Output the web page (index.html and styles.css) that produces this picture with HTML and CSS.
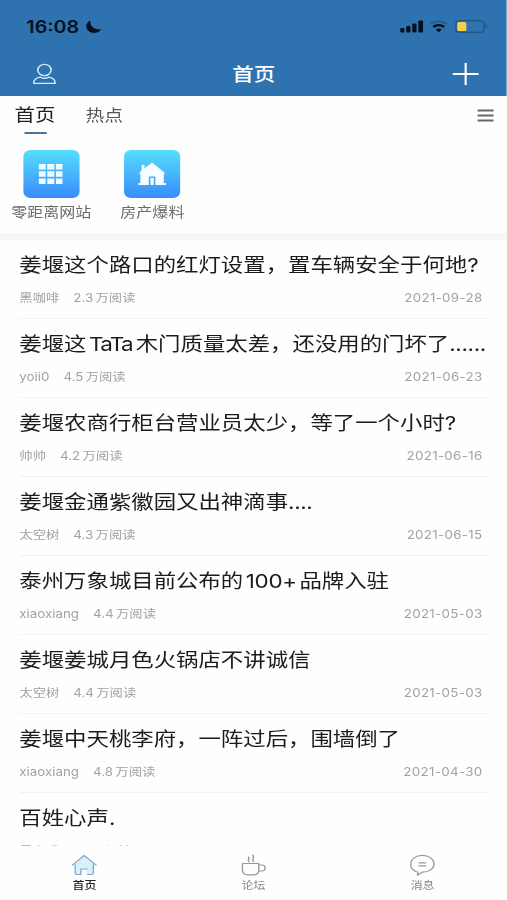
FILE: index.html
```
<!DOCTYPE html>
<html lang="zh-CN">
<head>
    <meta charset="UTF-8">
    <meta name="viewport" content="width=device-width, initial-scale=1.0">
    <title>首页</title>
    <link rel="stylesheet" href="styles.css">
</head>
<body>
<div class="app">
    <header>
        <div class="status">
            <span class="time">16:08</span>
            <svg class="moon" width="14" height="14" viewBox="0 0 14 14"><path d="M4.200 .4A6.700 6.700 0 1 0 13.600 9C9 10.800 3.200 6.500 4.200 .4z" fill="#05101f"/></svg>
            <svg class="signal" width="20" height="13" viewBox="0 0 20 13" fill="#05101f">
                <rect x="0" y="8" width="3.6" height="4.5" rx="1"/>
                <rect x="5.2" y="6" width="3.6" height="6.5" rx="1"/>
                <rect x="10.4" y="3.5" width="3.6" height="9" rx="1"/>
                <rect x="15.6" y="0.5" width="4" height="12" rx="1"/>
            </svg>
            <svg class="wifi" width="16" height="13" viewBox="0 0 16 13" fill="none">
                <path d="M1 4.2a10.2 10.2 0 0 1 14 0" stroke="#1f5d93" stroke-width="1.8"/>
                <path d="M3.3 7a6.8 6.8 0 0 1 9.4 0" stroke="#05101f" stroke-width="2.2"/>
                <path d="M5.4 9.6a3.8 3.8 0 0 1 5.2 0L8 12.2z" fill="#05101f"/>
            </svg>
            <svg class="battery" width="28" height="13" viewBox="0 0 28 13">
                <rect x=".6" y=".6" width="24" height="11.8" rx="3" fill="none" stroke="#1f5688" stroke-width="1.2"/>
                <rect x="1.8" y="2" width="7.8" height="9" rx="1.5" fill="#f5cf4a"/>
                <path d="M25.8 4.5v4c2-.6 2-3.4 0-4z" fill="#1f5688"/>
            </svg>
        </div>
        <div class="navbar">
            <svg class="user" width="20" height="22" viewBox="0 0 20 22" fill="none" stroke="#d3eaf8" stroke-width="1.3">
                <circle cx="10" cy="7" r="5.7"/>
                <path d="M.8 20.3c0-4 3-5.7 5.8-6.1 1.9 1.2 4.9 1.2 6.8 0 2.8.4 5.8 2.1 5.8 6.1z" stroke-linejoin="round"/>
            </svg>
            <h1>首页</h1>
            <svg class="plus" width="24" height="24" viewBox="0 0 24 24" stroke="#fff" stroke-width="1.8"><path d="M1 12h22M12 1v22"/></svg>
        </div>
    </header>

    <nav class="tabs">
        <a class="tab active">首页</a>
        <a class="tab">热点</a>
        <svg class="menu" width="14" height="13" viewBox="0 0 14 13" stroke="#666" stroke-width="1.9"><path d="M0 1.500h14M0 6.500h14M0 11.500h14"/></svg>
    </nav>

    <section class="shortcuts">
        <div class="shortcut">
            <div class="tile">
                <svg width="21" height="20" viewBox="0 0 21 20" fill="#f2fbff">
                    <path d="M0 0h6v5.600H0zM7.400 0h6v5.600h-6zM14.800 0h5.600v5.600h-5.600zM0 7.200h6v5.600H0zM7.400 7.200h6v5.600h-6zM14.800 7.200h5.600v5.600h-5.600zM0 14.400h6v5.600H0zM7.400 14.400h6v5.600h-6zM14.800 14.400h5.600v5.600h-5.600z"/>
                </svg>
            </div>
            <span>零距离网站</span>
        </div>
        <div class="shortcut">
            <div class="tile">
                <svg width="24" height="24" viewBox="0 0 24 24" fill="#f7fdff">
                    <path d="M12 .5 5.500 6.200V3H3v5.600L1 11l1 1.500V21H.2v2h9V14.500h5.600V23h9v-2H22v-8.500l1-1.500z"/>
                    <path d="M10.600 16h2.800v7h-2.800z"/>
                </svg>
            </div>
            <span>房产爆料</span>
        </div>
    </section>

    <main>
        <article>
            <h2>姜堰这个路口的红灯设置，置车辆安全于何地?</h2>
            <p><span>黑咖啡</span><span>2.3 万阅读</span><time>2021-09-28</time></p>
        </article>
        <article>
            <h2>姜堰这 <b class="name">TaTa</b> 木门质量太差，还没用的门坏了<i>......</i></h2>
            <p><span>yoii0</span><span>4.5 万阅读</span><time>2021-06-23</time></p>
        </article>
        <article>
            <h2>姜堰农商行柜台营业员太少，等了一个小时?</h2>
            <p><span>帅帅</span><span>4.2 万阅读</span><time>2021-06-16</time></p>
        </article>
        <article>
            <h2>姜堰金通紫徽园又出神滴事<i>....</i></h2>
            <p><span>太空树</span><span>4.3 万阅读</span><time>2021-06-15</time></p>
        </article>
        <article>
            <h2>泰州万象城目前公布的 <b>100+</b> 品牌入驻</h2>
            <p><span>xiaoxiang</span><span>4.4 万阅读</span><time>2021-05-03</time></p>
        </article>
        <article>
            <h2>姜堰姜城月色火锅店不讲诚信</h2>
            <p><span>太空树</span><span>4.4 万阅读</span><time>2021-05-03</time></p>
        </article>
        <article>
            <h2>姜堰中天桃李府，一阵过后，围墙倒了</h2>
            <p><span>xiaoxiang</span><span>4.8 万阅读</span><time>2021-04-30</time></p>
        </article>
        <article>
            <h2>百姓心声.</h2>
            <p><span>黑咖啡</span><span>4.1 万阅读</span></p>
        </article>
    </main>

    <footer>
        <a class="active">
            <svg width="22" height="22" viewBox="0 0 22 22" fill="none" stroke="#7fa6c6" stroke-width="1.1" stroke-linejoin="round" stroke-linecap="round">
                <path d="M3.2 9.5 11 2.5l7.8 7V20.3h-6v-5.3H8.6v5.3H3.2z" fill="#d9effc" stroke="none"/>
                <path d="M.8 11.2 11 1.500l10.200 9.700M3.200 10.500v8.300q0 1.700 1.700 1.700h3.300v-5.500h5.400M13.800 20.500h3.300q1.700 0 1.700-1.700v-8.300"/>
            </svg>
            首页
        </a>
        <a>
            <svg width="22" height="22" viewBox="0 0 22 22" fill="none" stroke="#999" stroke-width="1.2" stroke-linejoin="round" stroke-linecap="round">
                <path d="M1.200 9.500h14v6.500q0 4.800-4.600 4.800H5.800q-4.600 0-4.600-4.800zM15.200 11h2.600q2.800 0 2.800 3t-2.800 3h-2.800"/>
                <path d="M6.800 7.500c-1.800-1.500 1-2.500-.5-4.500M10.700 7.500c-2-2.200 1.400-3.600-.7-6.500"/>
            </svg>
            论坛
        </a>
        <a>
            <svg width="22" height="22" viewBox="0 0 22 22" fill="none" stroke="#999" stroke-width="1.2" stroke-linejoin="round" stroke-linecap="round">
                <path d="M5.800 17.800C2.800 16.300 1 13.800 1 10.500 1 5.200 5.500 1.300 11 1.300s10 3.900 10 8.700-4.500 8.200-10 8.200l-4.200 3 .4-3.400M8.200 8.800h5.600M8.200 11.800h5.600"/>
            </svg>
            消息
        </a>
    </footer>
</div>
</body>
</html>
```
FILE: styles.css
```
* {
    margin: 0;
    padding: 0;
    box-sizing: border-box;
}

body {
    width: 507px;
    height: 900px;
    overflow: hidden;
    background: #fefefe;
    font-family: Inter, "Noto Sans CJK SC", sans-serif;
}

/* wide letterforms: everything is stretched sideways */
.app {
    width: 433.4px;
    height: 900px;
    display: flex;
    flex-direction: column;
    transform: scaleX(1.17);
    transform-origin: 0 0;
}

header {
    flex: none;
    height: 96px;
    background: #2e73b0;
}

.status {
    height: 53px;
    padding: 0 16.5px 0 22.5px;
    display: flex;
    align-items: center;
}

.time {
    color: #05101f;
    font-size: 16.8px;
    font-weight: 600;
}

.moon {
    margin-left: 5px;
}

.signal {
    margin-left: auto;
}

.wifi {
    margin-left: 5px;
}

.battery {
    margin-left: 5.5px;
}

.navbar {
    height: 41px;
    padding: 0 23.5px 0 28px;
    display: flex;
    align-items: center;
    justify-content: space-between;
}

.navbar h1 {
    color: #fff;
    font-size: 18.4px;
    font-weight: 500;
    line-height: 24px;
}

.tabs {
    flex: none;
    height: 41px;
    padding: 0 11.5px 0 12.5px;
    display: flex;
    align-items: flex-start;
}

.tab {
    height: 38px;
    margin-right: 25.5px;
    color: #555;
    font-size: 16px;
    line-height: 38px;
}

.tab.active {
    color: #222;
    font-size: 17.5px;
}

.tab.active::after {
    content: "";
    display: block;
    width: 19px;
    height: 2px;
    margin: -2px auto 0;
    background: #4a749c;
}

.menu {
    margin: 13px 0 0 auto;
}

.shortcuts {
    flex: none;
    height: 103px;
    padding-top: 13px;
    padding-left: 0.5px;
    display: flex;
    border-bottom: 7px solid #f5f5f5;
}

.shortcut {
    width: 86.5px;
    text-align: center;
    color: #6c6c6c;
    font-size: 13.7px;
    line-height: 20px;
    white-space: nowrap;
}

.tile {
    width: 48px;
    height: 48px;
    margin: 0 auto 4px;
    display: flex;
    align-items: center;
    justify-content: center;
    border-radius: 6px;
    background: linear-gradient(#55defc, #3a8bfb);
}

main {
    flex: 1;
    min-height: 0;
    overflow: hidden;
    padding: 0 14px 0 16.5px;
}

article {
    height: 79px;
    padding-top: 11px;
    border-bottom: 1px solid #f2f2f2;
}

article h2 {
    color: #1c1c1c;
    font-size: 19.15px;
    font-weight: 400;
    line-height: 28px;
    white-space: nowrap;
    word-spacing: -3.3px;
}

article h2 b {
    font-weight: 400;
    letter-spacing: -0.2px;
}

article h2 .name {
    letter-spacing: -1.3px;
    margin-right: 1px;
}

article i {
    font-style: normal;
    letter-spacing: -0.3px;
}

article p {
    display: flex;
    margin-top: 10px;
    padding-right: 7px;
    color: #a2a2a2;
    font-size: 11.4px;
    line-height: 18px;
    word-spacing: -1.2px;
}

article p span {
    margin-right: 12px;
}

article time {
    margin-left: auto;
    letter-spacing: 0.28px;
}

footer {
    flex: none;
    height: 54px;
    display: flex;
    background: #fefefe;
}

footer a {
    flex: 1;
    padding-top: 8px;
    display: flex;
    flex-direction: column;
    align-items: center;
    color: #888;
    font-size: 10.2px;
    line-height: 19px;
}

footer a.active {
    color: #222;
    font-weight: 500;
}
```
